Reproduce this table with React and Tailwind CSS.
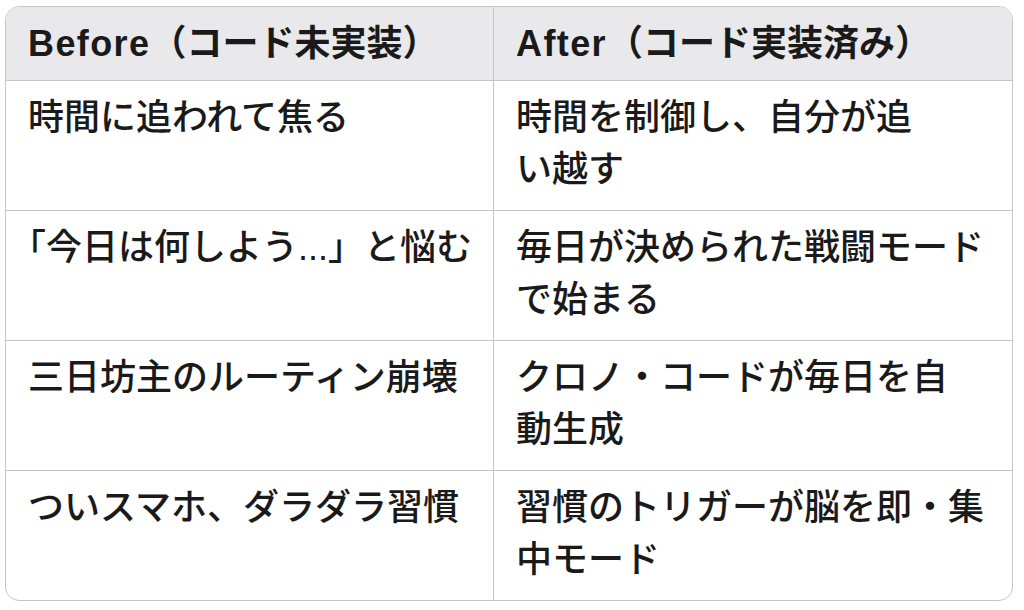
import React from 'react';

const rows = [
  { before: ['時間に追われて焦る'], after: ['時間を制御し、自分が追', 'い越す'] },
  { before: ['「今日は何しよう...」と悩む'], after: ['毎日が決められた戦闘モード', 'で始まる'] },
  { before: ['三日坊主のルーティン崩壊'], after: ['クロノ・コードが毎日を自', '動生成'] },
  { before: ['ついスマホ、ダラダラ習慣'], after: ['習慣のトリガーが脳を即・集', '中モード'] },
];

// trims a leading opening bracket to half width, like the reference
function Line({ text }) {
  if (text.startsWith('「')) {
    return (
      <span className="block whitespace-nowrap">
        <span className="[font-feature-settings:'halt']">「</span>
        {text.slice(1)}
      </span>
    );
  }
  return <span className="block whitespace-nowrap">{text}</span>;
}

function Head({ latin, rest, border }) {
  return (
    <div
      className={
        'px-[22px] pt-[11px] text-[36px] leading-[52px] font-bold whitespace-nowrap' +
        (border ? ' border-r border-[#c6c6c8]' : '')
      }
    >
      <span className="tracking-[1.4px]">{latin}</span>
      {rest}
    </div>
  );
}

export default function App() {
  return (
    <div
      className="min-h-[610px] bg-white pt-[6px] pl-[5px] text-[#1a1a1a]"
      style={{ fontFamily: '"Liberation Sans", "Noto Sans CJK JP", sans-serif' }}
    >
      <div className="w-[1008px] border border-[#c6c6c8] rounded-[14px] overflow-hidden">
        {/* Header */}
        <div className="grid grid-cols-[488px_1fr] bg-[#e9e9eb] border-b border-[#c6c6c8] h-[74px]">
          <Head latin="Before" rest="（コード未実装）" border />
          <Head latin="After" rest="（コード実装済み）" />
        </div>

        {/* Body */}
        {rows.map((row, index) => (
          <div
            key={index}
            className={
              index < rows.length - 1
                ? 'grid grid-cols-[488px_1fr] h-[130px] border-b border-[#c6c6c8]'
                : 'grid grid-cols-[488px_1fr] h-[129px]'
            }
          >
            <div className="px-[22px] pt-[11px] text-[36px] leading-[52px] font-medium border-r border-[#c6c6c8]">
              {row.before.map((t, i) => (
                <Line key={i} text={t} />
              ))}
            </div>
            <div className="px-[22px] pt-[11px] text-[36px] leading-[52px] font-medium">
              {row.after.map((t, i) => (
                <Line key={i} text={t} />
              ))}
            </div>
          </div>
        ))}
      </div>
    </div>
  );
}
